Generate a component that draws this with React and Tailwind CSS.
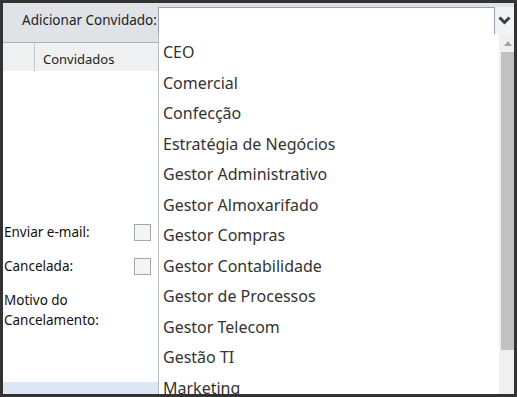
const cargos = [
  "CEO",
  "Comercial",
  "Confecção",
  "Estratégia de Negócios",
  "Gestor Administrativo",
  "Gestor Almoxarifado",
  "Gestor Compras",
  "Gestor Contabilidade",
  "Gestor de Processos",
  "Gestor Telecom",
  "Gestão TI",
  "Marketing",
];

const font = { fontFamily: "'Noto Sans', 'Open Sans', sans-serif" };

const App = () => {
  return (
    <div
      className="relative w-[517px] h-[397px] border-[3px] border-[#333333] bg-white overflow-hidden text-[#1a1a1a]"
      style={font}
    >
      {/* barra superior */}
      <div className="flex items-start h-[40px] bg-[#dfe3e8] border-b border-[#a9b1ba]">
        <span className="pl-[19px] pt-[8px] text-[13.5px] leading-[18px] text-[#222] w-[155px] whitespace-nowrap">
          Adicionar Convidado:
        </span>
        <div className="mt-[4px] h-[28px] w-[337px] bg-white border border-[#99a4b0]" />
        <div className="mt-[4px] h-[27px] flex-1 bg-[#f2f3f5] flex items-center justify-center">
          <svg width="13" height="9" viewBox="0 0 13 9">
            <path d="M1.5 1.5 L6.5 6.5 L11.5 1.5" stroke="#3d3d3d" strokeWidth="3" fill="none" />
          </svg>
        </div>
      </div>

      {/* cabeçalho da grade */}
      <div className="flex h-[28px] bg-[#eef0f2]">
        <div className="w-[32px] border-r border-[#c4c8cc]" />
        <span className="pl-[8px] pt-[7px] text-[13px] leading-[18px] text-[#222]">Convidados</span>
      </div>

      {/* formulário */}
      <div className="flex flex-col pl-[1px] pt-[144px] text-[13.5px] text-[#111] w-[155px]">
        <div className="flex items-center justify-between h-[34px]">
          <span>Enviar e-mail:</span>
          <span className="mr-[7px] w-[17px] h-[17px] border border-[#a8a8a8] bg-[#f3f4f6]" />
        </div>
        <div className="flex items-center justify-between h-[34px]">
          <span>Cancelada:</span>
          <span className="mr-[7px] w-[17px] h-[17px] border border-[#a8a8a8] bg-[#f3f4f6]" />
        </div>
        <span className="pt-[7px] leading-[20px]">
          Motivo do
          <br />
          Cancelamento:
        </span>
      </div>
      <div className="absolute left-0 bottom-0 w-[155px] h-[12px] bg-[#dce6f4]" />

      {/* lista suspensa */}
      <div className="absolute left-[155px] top-[31px] right-0 bottom-0 flex bg-white border-l border-[#b5bcc4]">
        <ul className="flex-1 overflow-hidden pt-[3px]">
          {cargos.map((c) => (
            <li key={c} className="h-[30.5px] flex items-center pl-[4px] text-[16px] text-[#333] whitespace-nowrap">
              {c}
            </li>
          ))}
        </ul>
        <div className="w-[15px] bg-[#f0f0f0] flex flex-col">
          <div className="h-[18px] flex items-center justify-center pl-[2px]">
            <svg width="8" height="5" viewBox="0 0 8 5">
              <path d="M0 5 L4 0 L8 5 Z" fill="#a3a3a3" />
            </svg>
          </div>
          <div className="ml-[2px] h-[298px] bg-[#c1c1c1]" />
        </div>
      </div>
    </div>
  );
};

export default App;
